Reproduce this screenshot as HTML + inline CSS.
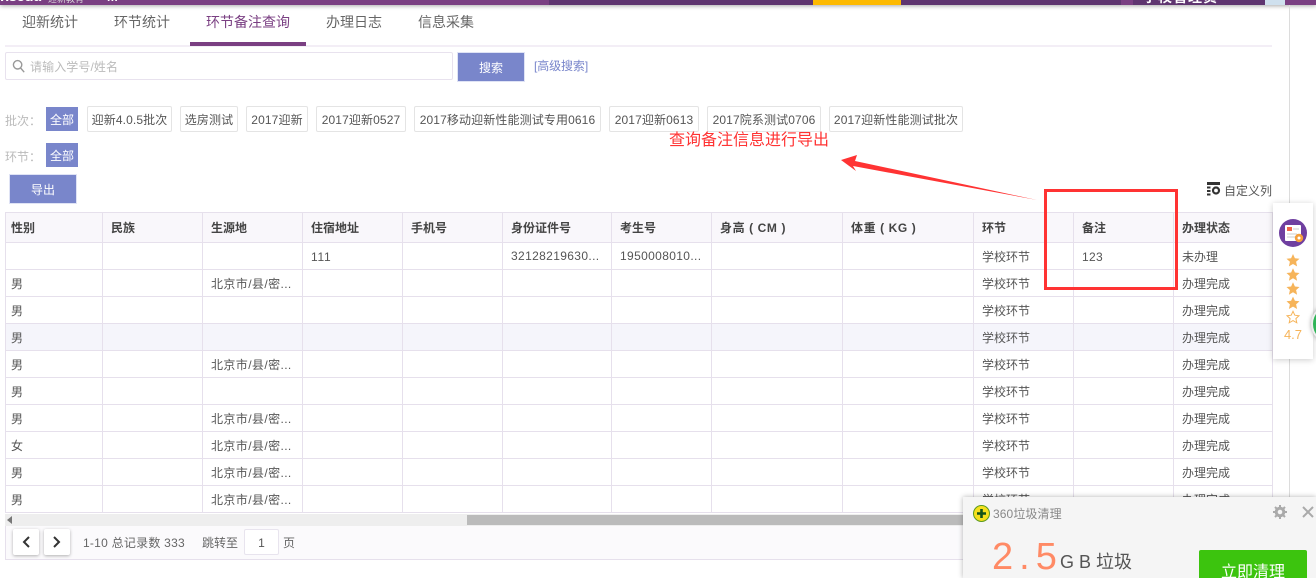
<!DOCTYPE html>
<html lang="zh-CN"><head><meta charset="utf-8"><title>环节备注查询</title>
<style>
*{box-sizing:border-box}
html,body{margin:0;padding:0;width:1316px;height:578px;overflow:hidden;background:#fff;font-family:"Liberation Sans","Noto Sans CJK SC",sans-serif;color:#555;font-size:12px}
.a{position:absolute}
.tab{position:absolute;top:12px;font-size:14px;line-height:20px;color:#666;white-space:nowrap}
.tag{position:absolute;top:106px;height:26px;line-height:26px;border:1px solid #e4e4e4;border-radius:2px;text-align:center;font-size:12px;color:#555;white-space:nowrap;background:#fff;letter-spacing:.12px}
.on{position:absolute;left:46px;width:32px;height:24px;line-height:26px;background:#7986cb;color:#fff;text-align:center;font-size:12px}
.lb{position:absolute;left:5px;color:#bbb;font-size:12px;line-height:16px}
.btn{position:absolute;background:#7986cb;border:1px solid #dfe3f5;color:#fff;text-align:center;font-size:12px}
table{border-collapse:collapse;table-layout:fixed;width:1267px}
td,th{border:1px solid #e6e0ec;padding:0 0 0 8px;height:27px;font-size:12px;font-weight:normal;color:#555;white-space:nowrap;overflow:hidden;text-align:left}
th{height:30px;background:#f9f7fb;color:#444;font-weight:bold}
td:first-child,th:first-child{padding-left:5px}
tr.h td{background:#f5f5fb}
.n{letter-spacing:.36px}
.d{position:relative;top:1px;letter-spacing:.7px}
.c{letter-spacing:.4px}
.u{letter-spacing:.6px}
</style></head><body>
<!-- top bar -->
<div class="a" style="left:0;top:0;width:1316px;height:5px;background:#5f3570;box-shadow:0 1px 4px rgba(0,0,0,.35);overflow:hidden">
<div class="a" style="left:0;top:0;width:549px;height:5px;background:#7a3f82"></div>
<div class="a" style="left:813px;top:0;width:88px;height:5px;background:#fdb900"></div>
<div class="a" style="left:1121px;top:0;width:12px;height:5px;background:#7a3f82"></div>
<div class="a" style="left:1285px;top:0;width:31px;height:5px;background:#7a3f82"></div>
<div class="a" style="left:0;top:-10px;color:#fff;font-weight:bold;font-size:15px;line-height:14px;letter-spacing:-.5px">nsedu</div>
<div class="a" style="left:48px;top:-7px;color:#ddd;font-size:9px;line-height:12px">迎新教育</div>
<div class="a" style="left:107px;top:-9px;color:#fff;font-size:12px;line-height:12px;font-weight:bold">m</div>
<div class="a" style="left:1143px;top:-10px;color:#fff;font-size:14px;line-height:14px;font-weight:bold;letter-spacing:1px">学校管理员</div>
<div class="a" style="left:1265px;top:0;width:20px;height:5px;background:#cfe0ee"></div>
</div>
<div class="a" style="left:1289px;top:5px;width:1px;height:573px;background:#dcdcdc"></div>

<!-- tabs -->
<div class="tab" style="left:22px">迎新统计</div>
<div class="tab" style="left:114px">环节统计</div>
<div class="tab" style="left:206px;color:#7a3f82">环节备注查询</div>
<div class="tab" style="left:326px">办理日志</div>
<div class="tab" style="left:418px">信息采集</div>
<div class="a" style="left:5px;top:45px;width:1267px;height:2px;background:#f3eef6"></div>
<div class="a" style="left:190px;top:42px;width:116px;height:4px;background:#7a3f82"></div>

<!-- search -->
<div class="a" style="left:5px;top:52px;width:448px;height:28px;border:1px solid #e8e2ee;border-radius:2px"></div>
<svg class="a" style="left:12px;top:59px" width="14" height="15" viewBox="0 0 14 15" fill="none" stroke="#999" stroke-width="1.4"><circle cx="5.6" cy="5.8" r="4.2"/><path d="M8.6 9l3.6 4.2"/></svg>
<div class="a" style="left:30px;top:59px;color:#bbb;font-size:12px;line-height:17px;letter-spacing:.1px">请输入学号/姓名</div>
<div class="btn" style="left:457px;top:52px;width:68px;height:30px;line-height:31px">搜索</div>
<div class="a" style="left:534px;top:58px;color:#7986cb;font-size:12px;line-height:16px;letter-spacing:-.1px">[高级搜索]</div>

<!-- filters -->
<div class="lb" style="top:113px">批次：</div>
<div class="on" style="top:107px">全部</div>
<div class="tag" style="left:87px;width:85px">迎新4.0.5批次</div>
<div class="tag" style="left:180px;width:58px">选房测试</div>
<div class="tag" style="left:246px;width:62px">2017迎新</div>
<div class="tag" style="left:316px;width:90px">2017迎新0527</div>
<div class="tag" style="left:414px;width:187px">2017移动迎新性能测试专用0616</div>
<div class="tag" style="left:609px;width:90px">2017迎新0613</div>
<div class="tag" style="left:707px;width:114px">2017院系测试0706</div>
<div class="tag" style="left:829px;width:134px">2017迎新性能测试批次</div>
<div class="lb" style="top:149px">环节：</div>
<div class="on" style="top:143px">全部</div>
<div class="btn" style="left:9px;top:174px;width:68px;height:30px;line-height:31px">导出</div>

<!-- custom cols -->
<svg class="a" style="left:1207px;top:182px" width="14" height="14" viewBox="0 0 14 14"><rect x="0" y="0" width="13" height="3" fill="#333"/><rect x="0" y="4.5" width="3.5" height="2" fill="#333"/><rect x="0" y="8" width="3.5" height="2" fill="#333"/><rect x="0" y="11.5" width="3.5" height="2" fill="#333"/><circle cx="9" cy="8.5" r="3" fill="none" stroke="#333" stroke-width="2.2"/></svg>
<div class="a" style="left:1224px;top:183px;font-size:12px;line-height:17px;color:#555">自定义列</div>

<!-- table -->
<div class="a" style="left:5px;top:212px;width:1268px;height:302px;overflow:hidden">
<table>
<colgroup><col style="width:97px"><col style="width:100px"><col style="width:100px"><col style="width:100px"><col style="width:100px"><col style="width:109px"><col style="width:100px"><col style="width:131px"><col style="width:131px"><col style="width:100px"><col style="width:100px"><col style="width:99px"></colgroup>
<tr><th>性别</th><th>民族</th><th>生源地</th><th>住宿地址</th><th>手机号</th><th>身份证件号</th><th>考生号</th><th><span class="u">身高 ( CM )</span></th><th><span class="u">体重 ( KG )</span></th><th>环节</th><th>备注</th><th>办理状态</th></tr>
<tr><td></td><td></td><td></td><td><span class="d">111</span></td><td></td><td><span class="n">32128219630...</span></td><td><span class="n">1950008010...</span></td><td></td><td></td><td>学校环节</td><td><span class="d" style="letter-spacing:.3px">123</span></td><td>未办理</td></tr>
<tr><td>男</td><td></td><td><span class="c">北京市/县/密...</span></td><td></td><td></td><td></td><td></td><td></td><td></td><td>学校环节</td><td></td><td>办理完成</td></tr>
<tr><td>男</td><td></td><td></td><td></td><td></td><td></td><td></td><td></td><td></td><td>学校环节</td><td></td><td>办理完成</td></tr>
<tr class="h"><td>男</td><td></td><td></td><td></td><td></td><td></td><td></td><td></td><td></td><td>学校环节</td><td></td><td>办理完成</td></tr>
<tr><td>男</td><td></td><td><span class="c">北京市/县/密...</span></td><td></td><td></td><td></td><td></td><td></td><td></td><td>学校环节</td><td></td><td>办理完成</td></tr>
<tr><td>男</td><td></td><td></td><td></td><td></td><td></td><td></td><td></td><td></td><td>学校环节</td><td></td><td>办理完成</td></tr>
<tr><td>男</td><td></td><td><span class="c">北京市/县/密...</span></td><td></td><td></td><td></td><td></td><td></td><td></td><td>学校环节</td><td></td><td>办理完成</td></tr>
<tr><td>女</td><td></td><td><span class="c">北京市/县/密...</span></td><td></td><td></td><td></td><td></td><td></td><td></td><td>学校环节</td><td></td><td>办理完成</td></tr>
<tr><td>男</td><td></td><td><span class="c">北京市/县/密...</span></td><td></td><td></td><td></td><td></td><td></td><td></td><td>学校环节</td><td></td><td>办理完成</td></tr>
<tr><td>男</td><td></td><td><span class="c">北京市/县/密...</span></td><td></td><td></td><td></td><td></td><td></td><td></td><td>学校环节</td><td></td><td>办理完成</td></tr>
</table>
</div>

<!-- scrollbar -->
<div class="a" style="left:5px;top:514px;width:1268px;height:12px;background:#eee"></div>
<div class="a" style="left:467px;top:515px;width:500px;height:10px;background:#bbb"></div>
<svg class="a" style="left:7px;top:516px" width="6" height="9"><path d="M5 0v8L0 4z" fill="#777"/></svg>

<!-- pagination -->
<div class="a" style="left:5px;top:526px;width:1268px;height:34px;background:#fbfafc;border:1px solid #e6e0ec;border-top:0"></div>
<div class="a" style="left:13px;top:529px;width:26px;height:26px;background:#fff;border-radius:2px;box-shadow:0 1px 3px rgba(0,0,0,.3)"></div>
<div class="a" style="left:44px;top:529px;width:26px;height:26px;background:#fff;border-radius:2px;box-shadow:0 1px 3px rgba(0,0,0,.3)"></div>
<svg class="a" style="left:13px;top:529px" width="57" height="26" fill="none" stroke="#333" stroke-width="2"><path d="M16 8l-5 5 5 5"/><path d="M41 8l5 5-5 5"/></svg>
<div class="a" style="left:83px;top:535px;line-height:17px;color:#666;white-space:nowrap;letter-spacing:.25px">1-10 总记录数 333</div>
<div class="a" style="left:202px;top:535px;line-height:17px;color:#666">跳转至</div>
<div class="a" style="left:244px;top:529px;width:35px;height:26px;background:#fff;border:1px solid #e8e4ee;border-radius:2px;text-align:center;line-height:26px;color:#555">1</div>
<div class="a" style="left:283px;top:535px;line-height:17px;color:#666">页</div>

<!-- annotation -->
<div class="a" style="left:1044px;top:189px;width:134px;height:101px;border:3px solid #f33"></div>
<div class="a" style="left:669px;top:130px;color:#f33;font-size:16px;line-height:21px;white-space:nowrap">查询备注信息进行导出</div>
<svg class="a" style="left:830px;top:150px" width="220" height="60"><path d="M11 10L27 5 25 11 207 50 23 16 26 21z" fill="#f33"/></svg>

<!-- side widget -->
<div class="a" style="left:1273px;top:203px;width:40px;height:156px;background:#fff;box-shadow:0 1px 6px rgba(0,0,0,.2)"></div>
<div class="a" style="left:1311px;top:304px;width:40px;height:40px;border-radius:50%;background:#2fb457;border:2px solid #eee;box-shadow:0 0 4px rgba(0,0,0,.35)"></div>
<svg class="a" style="left:1279px;top:219px" width="28" height="28" viewBox="0 0 28 28"><circle cx="14" cy="14" r="14" fill="#6f3fa0"/><rect x="6" y="6" width="16" height="16" rx="1" fill="#fff"/><rect x="8" y="8" width="5" height="4" fill="#f0664a"/><path d="M14 10h6M8 15h10M8 18h8" stroke="#ccc"/><circle cx="20" cy="19" r="4.2" fill="#f5a03c"/><circle cx="20" cy="19" r="1.5" fill="#fff"/></svg>
<svg class="a" style="left:1286px;top:254px" width="14" height="70" viewBox="0 0 14 70"><g fill="#f6b45a"><path d="M7 0l1.9 4.2 4.6.5-3.4 3.1 1 4.6L7 10l-4.1 2.4 1-4.6L.5 4.7l4.6-.5z"/><path transform="translate(0 14.3)" d="M7 0l1.9 4.2 4.6.5-3.4 3.1 1 4.6L7 10l-4.1 2.4 1-4.6L.5 4.7l4.6-.5z"/><path transform="translate(0 28.3)" d="M7 0l1.9 4.2 4.6.5-3.4 3.1 1 4.6L7 10l-4.1 2.4 1-4.6L.5 4.7l4.6-.5z"/><path transform="translate(0 42.6)" d="M7 0l1.9 4.2 4.6.5-3.4 3.1 1 4.6L7 10l-4.1 2.4 1-4.6L.5 4.7l4.6-.5z"/></g><path transform="translate(0 56.5)" d="M7 .8l1.8 3.9 4.2.5-3.1 2.9.9 4.2L7 10.1l-3.8 2.2.9-4.2L1 5.2l4.2-.5z" fill="none" stroke="#f6b45a"/></svg>
<div class="a" style="left:1273px;top:327px;width:40px;text-align:center;font-size:13px;line-height:16px;color:#f6b45a">4.7</div>

<!-- 360 popup -->
<div class="a" style="left:963px;top:497px;width:353px;height:81px;background:#f5f5f5;box-shadow:0 0 5px rgba(0,0,0,.3)">
<svg class="a" style="left:10px;top:8px" width="17" height="17" viewBox="0 0 17 17"><circle cx="8.5" cy="8.5" r="8" fill="#f6e01c" stroke="#5c9a1e"/><path d="M8.5 4v9M4 8.5h9" stroke="#14531a" stroke-width="2.6"/></svg>
<div class="a" style="left:30px;top:9px;font-size:12px;line-height:17px;color:#888;white-space:nowrap;letter-spacing:.1px">360垃圾清理</div>
<svg class="a" style="left:310px;top:8px" width="14" height="14" viewBox="0 0 14 14"><circle cx="7" cy="7" r="3.8" fill="none" stroke="#aaa" stroke-width="3"/><path d="M7 0v3M7 11v3M0 7h3M11 7h3M2 2l2 2M10 10l2 2M12 2l-2 2M4 10l-2 2" stroke="#aaa" stroke-width="2"/></svg>
<svg class="a" style="left:339px;top:9px" width="12" height="12" fill="none" stroke="#aaa" stroke-width="2"><path d="M1 1l10 10M11 1L1 11"/></svg>
<div class="a" style="left:29px;top:39px;font-size:38px;line-height:42px;color:#ff8a65;letter-spacing:6px;white-space:nowrap;font-weight:normal">2.5</div>
<div class="a" style="left:97px;top:53px;font-size:18px;line-height:24px;color:#555;white-space:nowrap"><span style="letter-spacing:5px">GB</span><span>垃圾</span></div>
<div class="a" style="left:236px;top:53px;width:108px;height:28px;background:#3cc40e;border-radius:2px 2px 0 0;color:#fff;text-align:center;font-size:16px;line-height:46px;overflow:hidden">立即清理</div>
</div>
</body></html>
